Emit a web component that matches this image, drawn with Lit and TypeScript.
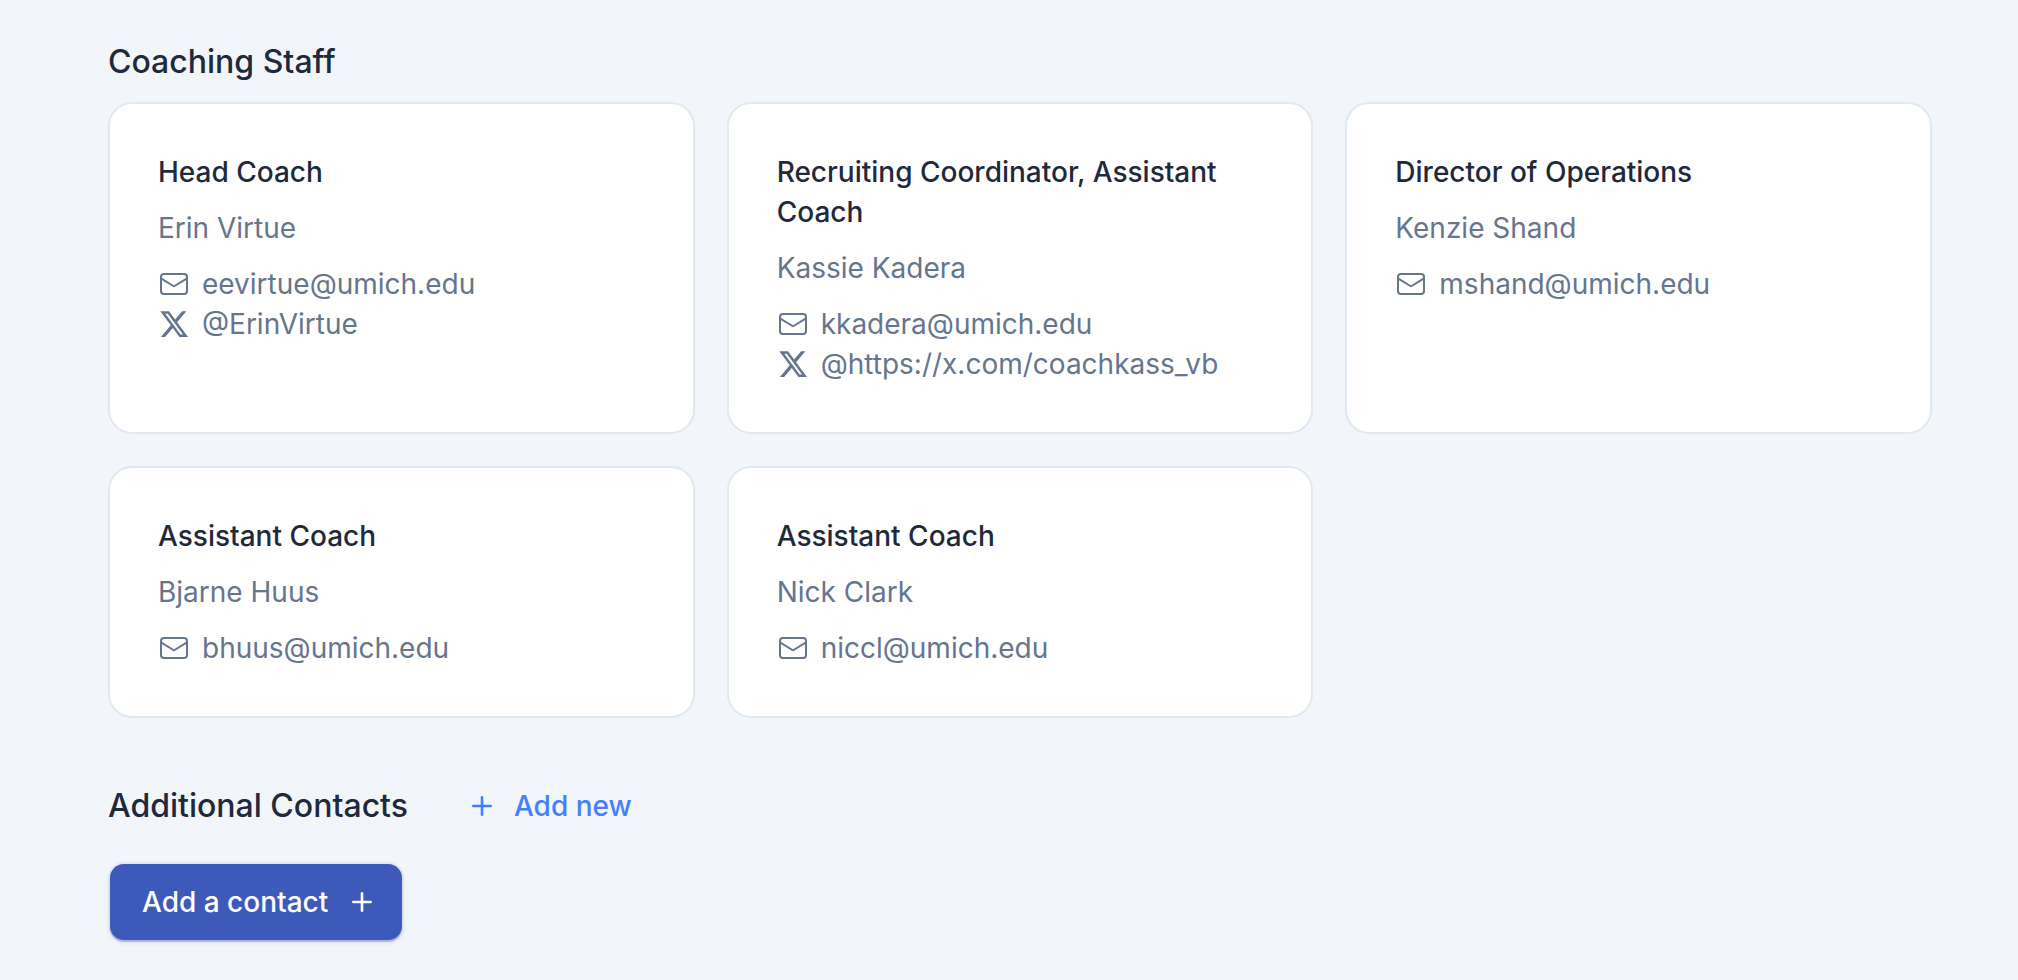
import { LitElement, html, css, svg } from "lit";
import { customElement, property } from "lit/decorators.js";

interface Coach {
  role: string;
  name: string;
  email: string;
  handle?: string;
}

const COACHES: Coach[] = [
  { role: "Head Coach", name: "Erin Virtue", email: "eevirtue@umich.edu", handle: "ErinVirtue" },
  {
    role: "Recruiting Coordinator, Assistant Coach",
    name: "Kassie Kadera",
    email: "kkadera@umich.edu",
    handle: "https://x.com/coachkass_vb",
  },
  { role: "Director of Operations", name: "Kenzie Shand", email: "mshand@umich.edu" },
  { role: "Assistant Coach", name: "Bjarne Huus", email: "bhuus@umich.edu" },
  { role: "Assistant Coach", name: "Nick Clark", email: "niccl@umich.edu" },
];

const mailIcon = html`<svg class="icon" viewBox="0 0 32 32" aria-hidden="true">
  ${svg`<rect x="3" y="6" width="26" height="20" rx="3" /><path d="M3 10.4 L15.4 18 Q16 18.4 16.6 18 L29 10.4" />`}
</svg>`;

const xIcon = html`<svg class="icon solid" viewBox="0 0 32 32" aria-hidden="true">
  ${svg`<path transform="translate(2.3 3.3) scale(1.155 1.185)" d="M18.901 0H22.581L14.541 9.19L24 21.693H16.594L10.794 14.11L4.156 21.693H0.474L9.074 11.863L0 0H7.594L12.837 6.932L18.901 0ZM17.61 19.491H19.649L6.486 2.087H4.298L17.61 19.491Z" />`}
</svg>`;

const plusIcon = html`<svg class="plus" viewBox="0 0 24 24" aria-hidden="true">
  ${svg`<path d="M12 3.3v17.4M3.3 12h17.4" />`}
</svg>`;

@customElement("coach-card")
class CoachCard extends LitElement {
  @property({ attribute: false }) coach!: Coach;

  static styles = css`
    :host {
      display: block;
      box-sizing: border-box;
      padding: 48px;
      border: 2px solid #e2e8f0;
      border-radius: 24px;
      background: #ffffff;
      color: #66758e;
    }
    .role,
    .name {
      margin: 0 0 16px;
      font-size: 28px;
      line-height: 40px;
      font-weight: 400;
    }
    .role {
      font-weight: 500;
      color: #1f293c;
    }
    .link {
      display: flex;
      align-items: center;
      gap: 12px;
      color: inherit;
      text-decoration: none;
    }
    .icon {
      flex: none;
      width: 32px;
      height: 32px;
      fill: none;
      stroke: currentColor;
      stroke-width: 2;
    }
    .solid {
      fill: currentColor;
      stroke: none;
    }
  `;

  render() {
    const { role, name, email, handle } = this.coach;
    return html`
      <h3 class="role">${role}</h3>
      <p class="name">${name}</p>
      <a class="link" href="mailto:${email}">${mailIcon}<span>${email}</span></a>
      ${handle ? html`<a class="link" href="#">${xIcon}<span>@${handle}</span></a>` : null}
    `;
  }
}

@customElement("app-root")
class AppRoot extends LitElement {
  static styles = css`
    :host {
      display: block;
      box-sizing: border-box;
      min-height: 100vh;
      padding: 38px 86px 40px 108px;
      background: #f2f5fa;
      color: #1f293c;
      font-family: Inter, "Liberation Sans", sans-serif;
      font-size: 28px;
      line-height: 40px;
    }
    .title {
      margin: 0;
      font-size: 32px;
      line-height: 48px;
      font-weight: 500;
    }
    .grid {
      display: grid;
      grid-template-columns: repeat(3, minmax(0, 1fr));
      gap: 32px;
      margin-top: 16px;
    }
    .bar {
      display: flex;
      align-items: center;
      gap: 62px;
      margin-top: 64px;
    }
    .link-button,
    .button {
      display: inline-flex;
      align-items: center;
      gap: 20px;
      border: 0;
      font: inherit;
      font-weight: 500;
      cursor: pointer;
    }
    .link-button {
      padding: 0;
      background: none;
      color: #447ffc;
    }
    .button {
      gap: 22px;
      margin: 34px 2px 0;
      padding: 18px 28px 18px 32px;
      border-radius: 14px;
      background: #3d59ba;
      color: #ffffff;
      box-shadow: 0 0 0 2px rgba(61, 89, 186, 0.06), 0 2px 1px rgba(61, 89, 186, 0.3),
        0 2px 6px rgba(15, 23, 42, 0.1);
    }
    .plus {
      width: 24px;
      height: 24px;
      fill: none;
      stroke: currentColor;
      stroke-width: 2.6;
      stroke-linecap: round;
    }
  `;

  render() {
    return html`
      <main>
        <section>
          <h2 class="title">Coaching Staff</h2>
          <div class="grid">
            ${COACHES.map((coach) => html`<coach-card .coach=${coach}></coach-card>`)}
          </div>
        </section>
        <section>
          <div class="bar">
            <h2 class="title">Additional Contacts</h2>
            <button class="link-button" type="button">${plusIcon}<span>Add new</span></button>
          </div>
          <button class="button" type="button"><span>Add a contact</span>${plusIcon}</button>
        </section>
      </main>
    `;
  }
}
